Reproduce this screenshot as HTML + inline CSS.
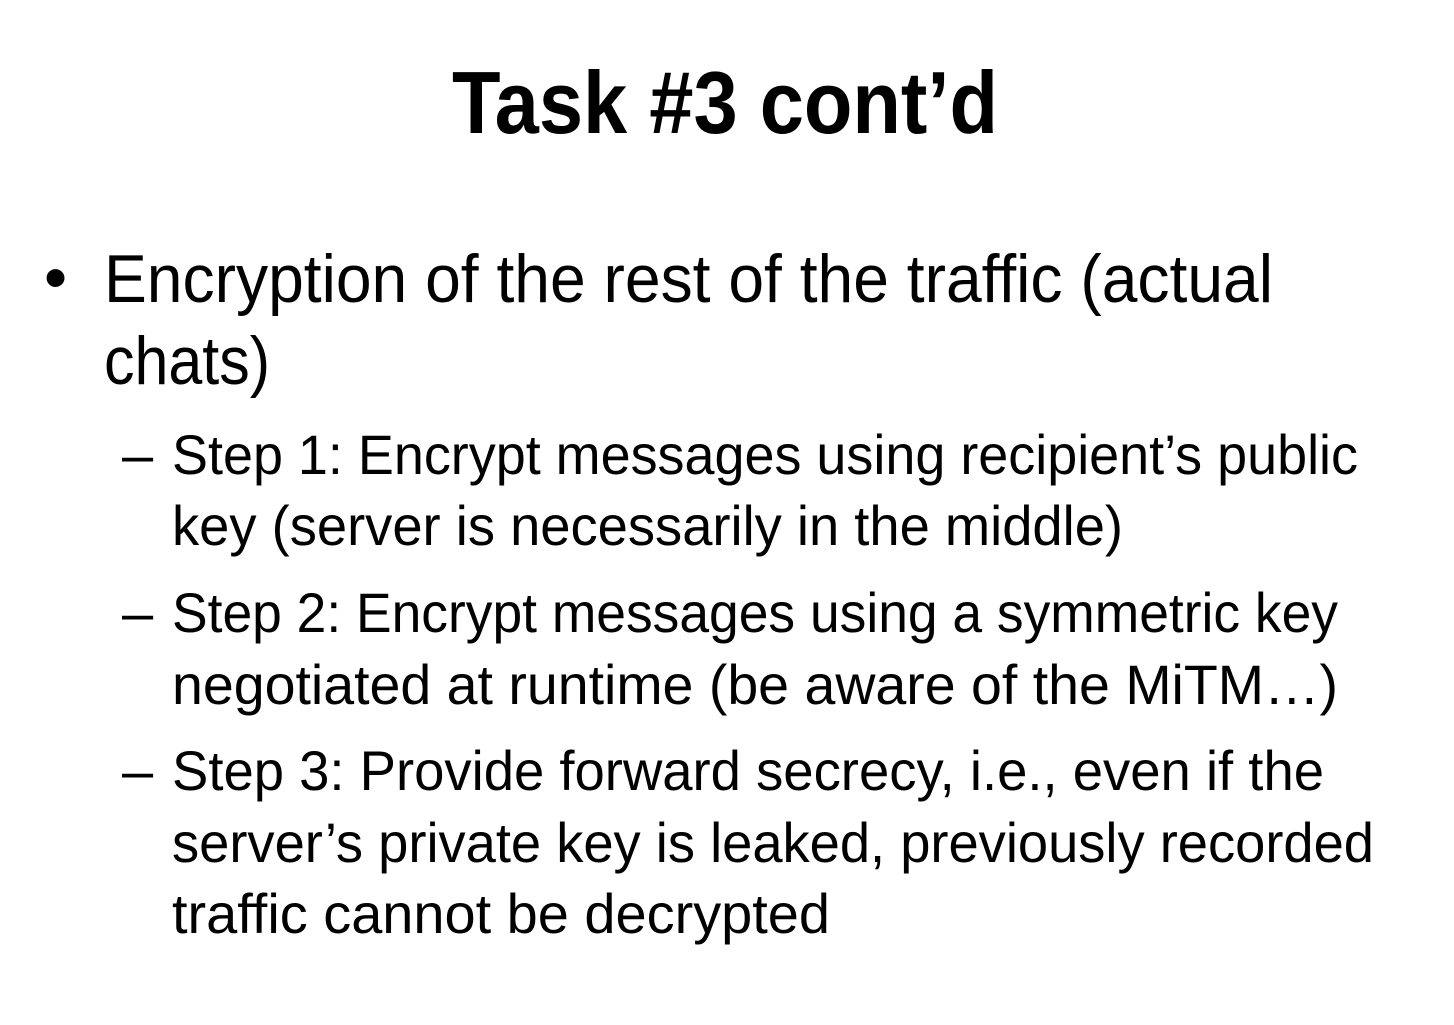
<!DOCTYPE html>
<html><head><meta charset="utf-8"><style>
html,body{margin:0;padding:0;background:#fff;}
svg{display:block;}
text{font-family:"Liberation Sans",sans-serif;fill:#000;}
</style></head><body>
<svg width="1454" height="1025" viewBox="0 0 1454 1025">
<text x="452" y="133" font-size="88" font-weight="bold" textLength="546" lengthAdjust="spacingAndGlyphs">Task #3 cont’d</text>
<text x="44" y="300" font-size="66">•</text>
<text x="104" y="302" font-size="68" textLength="1169" lengthAdjust="spacingAndGlyphs">Encryption of the rest of the traffic (actual</text>
<text x="104" y="384" font-size="68" textLength="166" lengthAdjust="spacingAndGlyphs">chats)</text>
<text x="122" y="474" font-size="56">–</text>
<text x="172" y="474" font-size="56" textLength="1186" lengthAdjust="spacingAndGlyphs">Step 1: Encrypt messages using recipient’s public</text>
<text x="172" y="545" font-size="56" textLength="951" lengthAdjust="spacingAndGlyphs">key (server is necessarily in the middle)</text>
<text x="122" y="632" font-size="56">–</text>
<text x="172" y="632" font-size="56" textLength="1166" lengthAdjust="spacingAndGlyphs">Step 2: Encrypt messages using a symmetric key</text>
<text x="172" y="704" font-size="56" textLength="1166" lengthAdjust="spacingAndGlyphs">negotiated at runtime (be aware of the MiTM…)</text>
<text x="122" y="790" font-size="56">–</text>
<text x="172" y="790" font-size="56" textLength="1152" lengthAdjust="spacingAndGlyphs">Step 3: Provide forward secrecy, i.e., even if the</text>
<text x="172" y="862" font-size="56" textLength="1202" lengthAdjust="spacingAndGlyphs">server’s private key is leaked, previously recorded</text>
<text x="172" y="933" font-size="56" textLength="658" lengthAdjust="spacingAndGlyphs">traffic cannot be decrypted</text>
</svg>
</body></html>
